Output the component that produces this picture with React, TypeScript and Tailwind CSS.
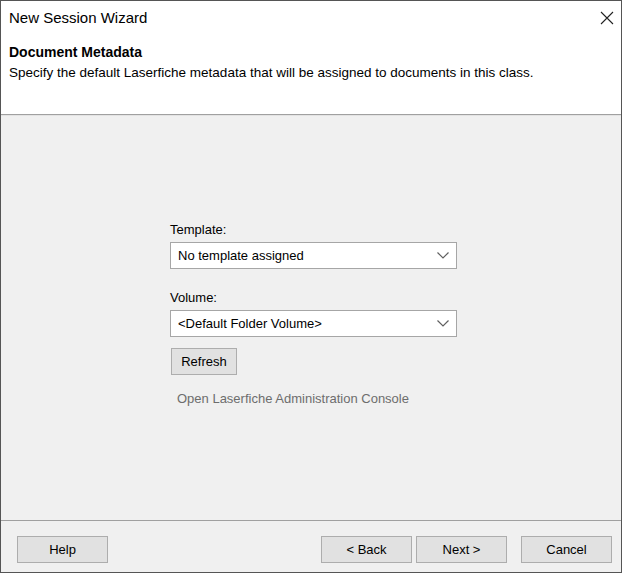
import React from "react";

function Combo({ value }: { value: string }) {
  return (
    <div className="flex h-[27px] w-[287px] items-center justify-between border border-[#a6a6a6] bg-white pl-[7px] pr-[6px] text-[13px] text-black">
      <span>{value}</span>
      <svg width="12" height="7" viewBox="0 0 12 7" className="mr-[1px]">
        <path d="M0.5 0.5 L6 6 L11.5 0.5" fill="none" stroke="#606060" strokeWidth="1.2" />
      </svg>
    </div>
  );
}

function Button({ label, width = "w-[91px]" }: { label: string; width?: string }) {
  return (
    <button className={`flex h-[27px] ${width} items-center justify-center border border-[#adadad] bg-[#e1e1e1] text-[13px] text-black`}>
      {label}
    </button>
  );
}

export default function App() {
  return (
    <div
      className="flex h-[573px] w-[622px] flex-col border border-[#555555] bg-white"
      style={{ fontFamily: '"Liberation Sans", Arial, sans-serif' }}
    >
      {/* Title bar */}
      <div className="flex h-[30px] items-center justify-between pl-[8px] pr-[6px]">
        <span className="pt-[4px] text-[15px] text-black">New Session Wizard</span>
        <svg width="14" height="14" viewBox="0 0 14 14" className="mr-[1px] mt-[4px]">
          <path d="M1 1 L13 13 M13 1 L1 13" stroke="#222" strokeWidth="1.1" fill="none" />
        </svg>
      </div>

      {/* Header */}
      <div className="h-[83px] px-[8px] pt-[13px]">
        <div className="text-[14px] font-bold leading-[17px] text-black">Document Metadata</div>
        <div className="mt-[4px] text-[13.5px] leading-[15px] text-black">
          Specify the default Laserfiche metadata that will be assigned to documents in this class.
        </div>
      </div>
      <div className="h-px bg-[#a0a0a0]" />
      <div className="h-px bg-[#e3e3e3]" />

      {/* Body */}
      <div className="flex flex-1 flex-col bg-[#f0f0f0] pl-[169px] pt-[106px]">
        <div className="text-[13px] leading-[16px] text-black">Template:</div>
        <div className="mt-[4px]">
          <Combo value="No template assigned" />
        </div>
        <div className="mt-[21px] text-[13px] leading-[16px] text-black">Volume:</div>
        <div className="mt-[4px]">
          <Combo value="<Default Folder Volume>" />
        </div>
        <div className="mt-[11px] pl-[1px]">
          <Button label="Refresh" width="w-[66px]" />
        </div>
        <div className="mt-[16px] pl-[7px] text-[13px] leading-[16px] text-[#6d6d6d]">
          Open Laserfiche Administration Console
        </div>
      </div>

      {/* Footer */}
      <div className="h-px bg-[#a0a0a0]" />
      <div className="flex h-[51px] items-start bg-[#f0f0f0] pl-[16px] pr-[9px] pt-[15px]">
        <Button label="Help" />
        <div className="flex-1" />
        <Button label="< Back" />
        <div className="w-[4px]" />
        <Button label="Next >" />
        <div className="w-[14px]" />
        <Button label="Cancel" />
      </div>
    </div>
  );
}
